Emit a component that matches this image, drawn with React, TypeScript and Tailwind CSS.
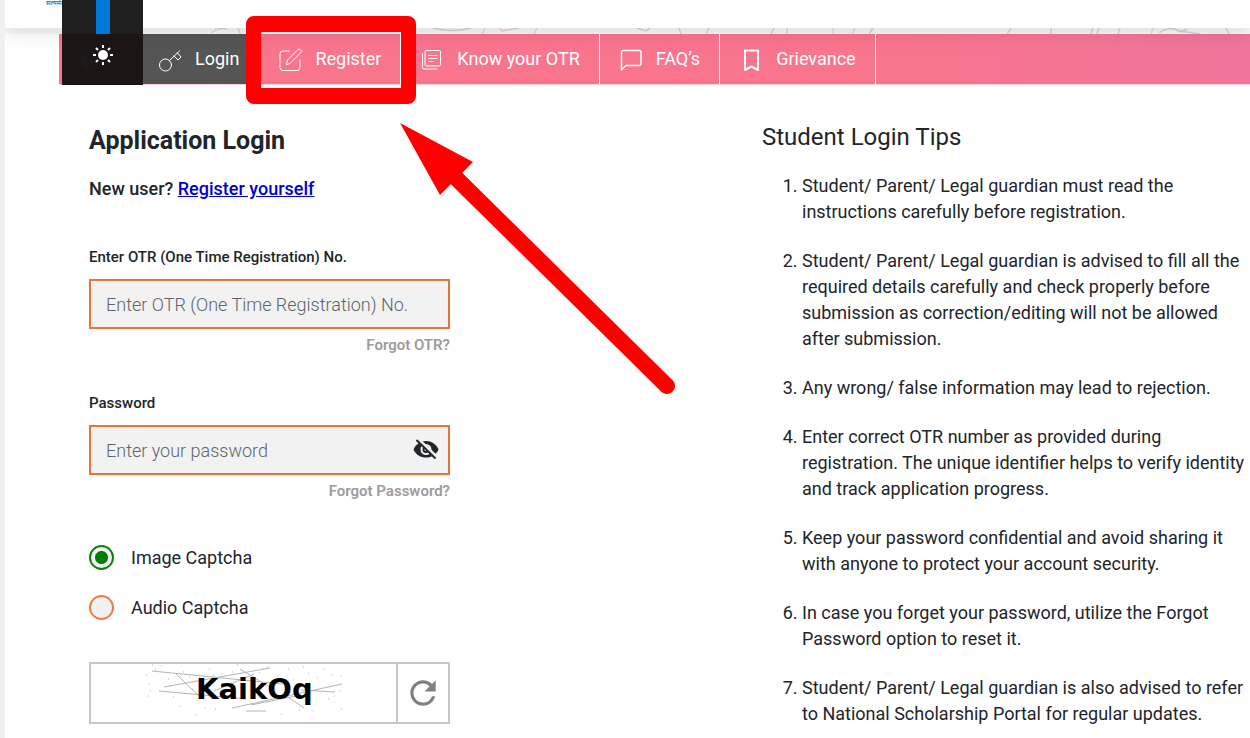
import type { ReactNode } from "react";
import { MdRefresh } from "react-icons/md";

const tips = [
  "Student/ Parent/ Legal guardian must read the instructions carefully before registration.",
  "Student/ Parent/ Legal guardian is advised to fill all the required details carefully and check properly before submission as correction/editing will not be allowed after submission.",
  "Any wrong/ false information may lead to rejection.",
  "Enter correct OTR number as provided during registration. The unique identifier helps to verify identity and track application progress.",
  "Keep your password confidential and avoid sharing it with anyone to protect your account security.",
  "In case you forget your password, utilize the Forgot Password option to reset it.",
  "Student/ Parent/ Legal guardian is also advised to refer to National Scholarship Portal for regular updates.",
];

const navLinks: { label: string; icon: ReactNode; active?: boolean }[] = [
  {
    label: "Login",
    active: true,
    icon: (
      <>
        <circle cx="7.5" cy="18" r="6" />
        <path d="M11.5 13.500 21.500 4M16 9l4 4 3-3-3.500-4" />
      </>
    ),
  },
  {
    label: "Register",
    icon: (
      <>
        <path d="M11.5 4H5a3 3 0 0 0-3 3v13.500a3 3 0 0 0 3 3h14a3 3 0 0 0 3-3V13" />
        <path d="M8.500 17.500 9.500 13 19.800 2.700a1.800 1.800 0 0 1 2.600 0l.4.4a1.800 1.800 0 0 1 0 2.600L12.500 16z" />
      </>
    ),
  },
  {
    label: "Know your OTR",
    icon: (
      <>
        <rect x="5" y="3.500" width="15.500" height="15.500" rx="1.500" />
        <path d="M2.500 7v13.500a1.500 1.500 0 0 0 1.500 1.500H17M8.500 8.500h8.500M8.500 11.500h8.500M8.500 14.500h5" />
      </>
    ),
  },
  {
    label: "FAQ’s",
    icon: (
      <path
        strokeWidth="1.500"
        d="M4 3.500h16a2 2 0 0 1 2 2v11a2 2 0 0 1-2 2H7L2.500 23V5a1.500 1.500 0 0 1 1.500-1.500z"
      />
    ),
  },
  {
    label: "Grievance",
    icon: <path strokeWidth="2" d="M6 3.500h13v19.500l-6.500-3.500L6 23z" />,
  },
];

function TopBar() {
  return (
    <header className="relative z-10 h-7 bg-white px-[41px] shadow-[0_4px_20px_rgba(0,0,0,0.12)]">
      <p className="font-['Noto_Sans_Devanagari',sans-serif] text-[7px] leading-2 text-gray-700">
        सत्यमेव जयते
      </p>
    </header>
  );
}

function Doodles() {
  return (
    <svg
      className="block h-1.5 w-full bg-[#f8f8f8]"
      viewBox="0 0 1245 6"
      preserveAspectRatio="xMinYMin slice"
      fill="none"
      strokeWidth="1.500"
      aria-hidden="true"
    >
      <path
        stroke="#cddbd7"
        d="M206 5q8-6 16-4M233 0l2 6M674 0l2 6M701 6l3-6M782 0v6M864 6l4-6"
      />
      <path
        stroke="#cfd6de"
        d="M428 0q20 5 38 0M632 0l9 3 4-3M1002 6l4-6M1046 0v6M1086 6l2-6M1092 6l2-6M1113 6l2-6M1154 5q8-6 16-4l6 3 6-3M1175 3l20 3M1221 0l3 6"
      />
      <path
        stroke="#e7dfcc"
        d="M477 6l3-6M529 6l3-6M828 0v6M847 6l3-6M1148 0l-2 6"
      />
      <path stroke="#e6d0dc" d="M494 0l3 3 17-3M766 6l3-6" />
    </svg>
  );
}

function Nav() {
  return (
    <nav className="ml-[54px] flex h-[51px] border-b border-[#fbd3db] bg-linear-to-r from-[#f9758d] from-70% to-[#f0749b]">
      <div className="w-20" />
      {navLinks.map(({ label, icon, active }) => (
        <a
          key={label}
          href="#"
          className={`flex items-center gap-3 border-r border-white px-[19px] text-lg text-white ${
            active ? "bg-[#555]" : ""
          }`}
        >
          <svg
            className="size-[25px] shrink-0"
            viewBox="0 0 25 25"
            fill="none"
            stroke="currentColor"
            strokeWidth="1"
            strokeLinejoin="round"
            strokeLinecap="round"
            aria-hidden="true"
          >
            {icon}
          </svg>
          {label}
        </a>
      ))}
    </nav>
  );
}

/* Brightness popup, sits over everything */
function Brightness() {
  return (
    <div className="absolute top-0 left-[57px] z-20 flex h-[85px] w-[81px] flex-col items-center bg-linear-to-b from-[#1f1f1f] from-40% to-[#1b1615] to-40%">
      <div className="h-[34px] w-3.5 bg-[#0078d7]" />
      <svg
        className="h-10 w-full"
        viewBox="0 0 81 40"
        fill="none"
        aria-hidden="true"
      >
        <path d="M26 20l-7 7 8 9M19 27h12" stroke="#1c1a1b" strokeWidth="3" />
        <circle cx="41" cy="21" r="5" fill="#fff" />
        <path
          d="M41 11v3M41 28v3M31 21h3M48 21h3M34 14l2 2M46 26l2 2M34 28l2-2M46 16l2-2"
          stroke="#fff"
          strokeWidth="2"
        />
      </svg>
    </div>
  );
}

function EyeOff() {
  return (
    <svg className="h-5 w-[26px]" viewBox="0 0 26 20" fill="none">
      <path
        fill="#212529"
        d="M.5 10.500C3 5 7.500 2 13 2s10 3 12.500 8.500C23 16 18.500 18.500 13 18.500S3 16 .5 10.500z"
      />
      <circle cx="13" cy="10.500" r="4.500" stroke="#f2f2f2" strokeWidth="2" />
      <circle cx="13" cy="10.500" r="1.500" fill="#f2f2f2" />
      <path d="M5 .5 23.500 18.500" stroke="#f2f2f2" strokeWidth="4" />
      <path d="M3.500 1 22.500 19.500" stroke="#212529" strokeWidth="2" />
    </svg>
  );
}

function Field({
  id,
  label,
  type,
  placeholder,
  forgot,
  children,
}: {
  id: string;
  label: string;
  type: string;
  placeholder: string;
  forgot: string;
  children?: ReactNode;
}) {
  return (
    <div className="flex flex-col">
      <label htmlFor={id} className="mb-3 text-[15px] leading-5 font-medium">
        {label}
      </label>
      <div className="relative">
        <input
          id={id}
          type={type}
          placeholder={placeholder}
          className="h-[50px] w-full border-2 border-[#e8743b] bg-[#f2f2f2] px-[15px] text-lg font-light placeholder:text-[#606468]"
        />
        {children}
      </div>
      <a
        href="#"
        className="mt-1.5 self-end text-[15px] leading-5 font-semibold text-[#9c9c9c]"
      >
        {forgot}
      </a>
    </div>
  );
}

function CaptchaOption({
  label,
  checked,
}: {
  label: string;
  checked?: boolean;
}) {
  return (
    <label className="flex h-[25px] items-center gap-[17px] text-lg">
      <input
        type="radio"
        name="captcha"
        defaultChecked={checked}
        className="size-[25px] appearance-none rounded-full border-2 border-[#f27a3d] bg-[#f2f2f2] bg-clip-padding checked:border-[#0b800b] checked:bg-[radial-gradient(circle,#008000_6px,#f2f2f2_7px)]"
      />
      {label}
    </label>
  );
}

function CaptchaImage() {
  return (
    <svg
      className="h-[58px] flex-1"
      viewBox="0 0 305 58"
      role="img"
      aria-label="Captcha"
    >
      <g stroke="#b4b4b4" fill="none">
        <path d="M61 7 192 20M73 23 179 4M68 27 155 35M85 10l24 23M123 27l40-17M149 5l33 20M141 44l110-24M160 41l45-9M155 47h20M197 33l16 11M210 26l34 2" />
        <path d="M61 1h1M70 2h1M55 11h1M58 20h1M59 27h1M57 32h1M64 5h1M88 42h1M98 13h1M101 25h1M105 51h1M113 44h1M118 5h1M122 12h1M124 45h1M130 10h1M141 8h1M146 1h1M150 36h1M168 9h1M171 4h1M176 3h1M186 12h1M190 50h1M197 5h1M202 16h1M208 46h1M212 3h1M215 40h1M217 9h1M222 47h1M226 14h1M233 5h1M237 35h1M241 11h1M243 32h1M249 12h1M250 45h1M248 27h1M77 15h1M82 33h1M92 8h1" />
      </g>
      <text
        x="105"
        y="35"
        fontSize="29"
        fontWeight="700"
        fontFamily="DejaVu Sans, sans-serif"
      >
        KaikOq
      </text>
    </svg>
  );
}

function LoginForm() {
  return (
    <form className="mt-1 w-[361px]">
      <h1 className="text-[25px] leading-8 font-bold">Application Login</h1>
      <p className="mt-5 mb-[46px] text-lg leading-6 font-medium">
        New user?{" "}
        <a href="#" className="text-[#0000d6] underline">
          Register yourself
        </a>
      </p>
      <div className="flex flex-col gap-[38px]">
        <Field
          id="otr"
          label="Enter OTR (One Time Registration) No."
          type="text"
          placeholder="Enter OTR (One Time Registration) No."
          forgot="Forgot OTR?"
        />
        <Field
          id="password"
          label="Password"
          type="password"
          placeholder="Enter your password"
          forgot="Forgot Password?"
        >
          <button
            type="button"
            aria-label="Show password"
            className="absolute top-3.5 right-[11px]"
          >
            <EyeOff />
          </button>
        </Field>
      </div>
      <div className="mt-11 flex flex-col gap-[25px]">
        <CaptchaOption label="Image Captcha" checked />
        <CaptchaOption label="Audio Captcha" />
      </div>
      <div className="mt-[42px] flex border-2 border-[#c8c8c8]">
        <CaptchaImage />
        <button
          type="button"
          aria-label="Refresh captcha"
          className="flex w-[52px] items-center justify-center border-l-2 border-[#c8c8c8] text-[#808080]"
        >
          <MdRefresh size={38} />
        </button>
      </div>
    </form>
  );
}

function Tips() {
  return (
    <section className="w-[488px]">
      <h2 className="text-2xl font-normal">Student Login Tips</h2>
      <ol className="mt-5 flex list-decimal flex-col gap-[23px] pl-10 text-lg leading-[26px]">
        {tips.map((tip) => (
          <li key={tip}>{tip}</li>
        ))}
      </ol>
    </section>
  );
}

/* Red frame and arrow pointing at Register */
function Callout() {
  return (
    <svg
      className="pointer-events-none absolute top-0 -left-[5px] z-30 h-[400px] w-[700px]"
      viewBox="0 0 700 400"
      aria-hidden="true"
    >
      <path
        fill="red"
        fillRule="evenodd"
        d="M254 16h154a8 8 0 0 1 8 8v72a8 8 0 0 1-8 8H254a8 8 0 0 1-8-8V24a8 8 0 0 1 8-8zM261 32v56h140V32z"
      />
      <path fill="red" d="M400 123l73 39-33 33z" />
      <path
        stroke="red"
        strokeWidth="16"
        strokeLinecap="round"
        d="M456 178 667 386"
      />
    </svg>
  );
}

function App() {
  return (
    <div className="relative min-h-screen overflow-hidden border-l-[5px] border-[#f0f0f0] bg-white font-[Roboto,sans-serif] text-[#212529]">
      <TopBar />
      <Doodles />
      <Nav />
      <main className="flex justify-between pt-9 pl-[84px]">
        <LoginForm />
        <Tips />
      </main>
      <Brightness />
      <Callout />
    </div>
  );
}

export default App;
